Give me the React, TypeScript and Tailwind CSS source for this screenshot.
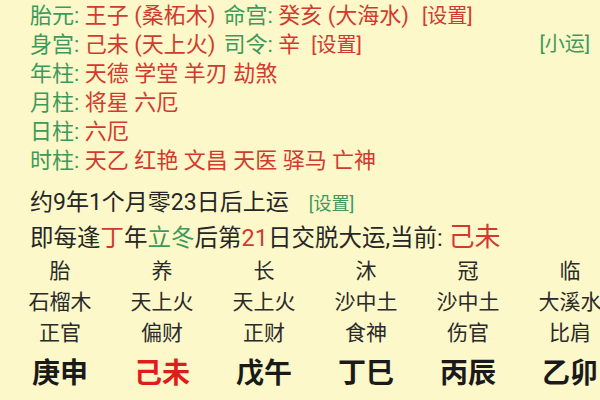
import React from 'react';

const G = 'text-[#3d9a5c]';
const R = 'text-[#d33a2f]';

const columns = [
  { a: '胎', b: '石榴木', c: '正官', d: '庚申', red: false },
  { a: '养', b: '天上火', c: '偏财', d: '己未', red: true },
  { a: '长', b: '天上火', c: '正财', d: '戊午', red: false },
  { a: '沐', b: '沙中土', c: '食神', d: '丁巳', red: false },
  { a: '冠', b: '沙中土', c: '伤官', d: '丙辰', red: false },
  { a: '临', b: '大溪水', c: '比肩', d: '乙卯', red: false },
];

function Label({ children }: { children: React.ReactNode }) {
  return <span className={G}>{children}: </span>;
}

export default function App() {
  return (
    <div
      className="w-[600px] h-[400px] overflow-hidden bg-[#fcf8c9] text-[#262626]"
      style={{ fontFamily: 'Roboto, "Noto Sans CJK SC", sans-serif' }}
    >
      {/* 神煞 */}
      <div className="pl-[30px] pt-[1px] text-[22px] leading-[29px]">
        <div className="h-[29px] whitespace-nowrap">
          <Label>胎元</Label>
          <span className={R}>王子 (桑柘木)</span>
          <span className="ml-2" />
          <Label>命宫</Label>
          <span className={R}>癸亥 (大海水)</span>
          <span className={`${R} ml-[13px] text-[20px]`}>[设置]</span>
        </div>
        <div className="flex h-[29px] whitespace-nowrap pr-[10px]">
          <span>
            <Label>身宫</Label>
            <span className={R}>己未 (天上火)</span>
            <span className="ml-2" />
            <Label>司令</Label>
            <span className={R}>辛</span>
            <span className={`${R} ml-[11px] text-[20px]`}>[设置]</span>
          </span>
          <span className={`${G} ml-auto text-[20px]`}>[小运]</span>
        </div>
        <div className="h-[29px]">
          <Label>年柱</Label>
          <span className={R}>天德 学堂 羊刃 劫煞</span>
        </div>
        <div className="h-[29px]">
          <Label>月柱</Label>
          <span className={R}>将星 六厄</span>
        </div>
        <div className="h-[29px]">
          <Label>日柱</Label>
          <span className={R}>六厄</span>
        </div>
        <div className="h-[29px]">
          <Label>时柱</Label>
          <span className={R}>天乙 红艳 文昌 天医 驿马 亡神</span>
        </div>
      </div>

      {/* 起运 */}
      <div className="pl-[30px] mt-[11px] whitespace-nowrap">
        <div className="h-[34px] leading-[34px] text-[23px]">
          约9年1个月零23日后上运
          <span className={`${G} text-[18px] ml-[20px]`}>[设置]</span>
        </div>
        <div className="h-[34px] leading-[34px] text-[23.5px]">
          即每逢<span className={R}>丁</span>年<span className={G}>立冬</span>后第
          <span className={R}>21</span>日交脱大运,当前: <span className={`${R} text-[26px] leading-[34px]`}>己未</span>
        </div>
      </div>

      {/* 大运表 */}
      <div className="grid grid-cols-[repeat(6,102px)] ml-[9px] mt-[2px] text-center text-[21px] text-[#2a2a2a]">
        {columns.map((col) => (
          <div key={col.d} className="flex flex-col items-center whitespace-nowrap">
            <div className="h-[31px] leading-[31px]">{col.a}</div>
            <div className="h-[31px] leading-[31px]">{col.b}</div>
            <div className="h-[31px] leading-[31px]">{col.c}</div>
            <div
              className={`mt-[5px] text-[28px] font-bold leading-[40px] ${col.red ? 'text-[#e01b1b]' : 'text-[#1a1a1a]'}`}
            >
              {col.d}
            </div>
          </div>
        ))}
      </div>
    </div>
  );
}
